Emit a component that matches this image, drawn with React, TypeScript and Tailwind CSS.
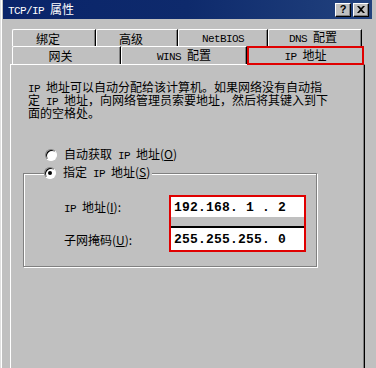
import type { ReactNode } from 'react';

const cjk = "font-['Noto_Sans_CJK_SC',sans-serif]";

// Latin part of SimSun text: narrow monospace
function M({ children }: { children: ReactNode }) {
    return <span className="font-['Liberation_Mono',monospace] text-[11px] tracking-[-0.6px]">{children}</span>;
}

function Radio({ checked }: { checked?: boolean }) {
    return (
        <div className="w-[12px] h-[12px] rounded-full border border-t-[#808080] border-l-[#808080] border-b-white border-r-white bg-white shadow-[inset_1px_1px_0_#000] flex items-center justify-center shrink-0">
            {checked && <div className="w-[4px] h-[4px] rounded-full bg-black" />}
        </div>
    );
}

function Tab({ className, children }: { className: string; children: ReactNode }) {
    return (
        <div className={`h-full flex items-center justify-center bg-[#c0c0c0] border-t border-l border-white border-r border-r-black rounded-tl-[2px] shadow-[inset_-1px_0_0_#808080] text-[12px] leading-[13px] text-black ${className}`}>
            <span className="whitespace-pre">{children}</span>
        </div>
    );
}

function TitleButton({ children }: { children: ReactNode }) {
    return (
        <div className="w-[16px] h-[14px] bg-[#c0c0c0] border border-t-white border-l-white border-b-black border-r-black shadow-[inset_-1px_-1px_0_#808080] flex items-center justify-center">
            {children}
        </div>
    );
}

export default function App() {
    return (
        <div className={`w-[376px] h-[368px] bg-[#c0c0c0] overflow-hidden flex flex-col shadow-[inset_1px_0_0_#dfdfdf,inset_2px_0_0_#fff] ${cjk}`}>
            {/* 标题栏 */}
            <div className="ml-[3px] w-[369px] h-[19px] shrink-0 flex items-center justify-between bg-gradient-to-r from-[#0a246a] via-[#0e2a6c] to-[#22427e] pl-[5px] pr-[3px]">
                <span className="text-white text-[12px] leading-[13px] whitespace-pre">
                    <M>TCP/IP </M>属性
                </span>
                <div className="flex gap-[2px]">
                    <TitleButton>
                        <span className="font-['Liberation_Sans',sans-serif] font-bold text-[11px] leading-none text-black">?</span>
                    </TitleButton>
                    <TitleButton>
                        <svg width="8" height="7" viewBox="0 0 8 7">
                            <path d="M0 0h2l2 2 2-2h2L5 3.5 8 7H6L4 5 2 7H0l3-3.5z" fill="#000" />
                        </svg>
                    </TitleButton>
                </div>
            </div>

            {/* 选项卡 */}
            <div className="mt-[10px] h-[17px] flex pl-[12px] shrink-0">
                <Tab className="w-[84px] pr-[12px]">绑定</Tab>
                <Tab className="w-[82px] pr-[12px]">高级</Tab>
                <Tab className="w-[90px]"><M>NetBIOS</M></Tab>
                <Tab className="w-[94px] pr-[4px]"><M>DNS </M>配置</Tab>
            </div>
            <div className="h-[18px] flex items-end pl-[12px] shrink-0">
                <Tab className="w-[109px] pr-[12px]">网关</Tab>
                <Tab className="w-[126px]"><M>WINS </M>配置</Tab>
                <div className="relative z-10 w-[117px] h-[19px] -mb-[1px] border-2 border-[#e00000] bg-[#c0c0c0] flex items-center justify-center text-[12px] leading-[13px] text-black">
                    <span className="whitespace-pre"><M>IP </M>地址</span>
                </div>
            </div>

            {/* 面板 */}
            <div className="ml-[10px] w-[355px] flex-1 border-l border-t border-white border-r border-r-black shadow-[inset_-1px_0_0_#808080] text-black text-[12px] leading-[13px]">
                <div className="ml-[17px] mt-[15px] whitespace-pre">
                    <div className="h-[13px]"><M>IP </M>地址可以自动分配给该计算机。如果网络没有自动指</div>
                    <div className="h-[13px]">定<M> IP </M>地址，向网络管理员索要地址，然后将其键入到下</div>
                    <div className="h-[13px]">面的空格处。</div>
                </div>

                <div className="ml-[34px] mt-[30px] flex items-center gap-[7px] h-[12px]">
                    <Radio />
                    <span className="whitespace-pre">自动获取<M> IP </M>地址(<u>O</u>)</span>
                </div>

                {/* 指定 IP 地址 分组框 */}
                <div className="relative ml-[12px] mt-[12px] w-[294px] h-[94px] border border-[#808080] shadow-[1px_1px_0_#fff,inset_1px_1px_0_#fff]">
                    <div className="absolute -top-[7px] left-[20px] flex items-center gap-[7px] bg-[#c0c0c0] pr-[2px] h-[12px]">
                        <Radio checked />
                        <span className="whitespace-pre">指定<M> IP </M>地址(<u>S</u>)</span>
                    </div>

                    <div className="flex mt-[21px]">
                        <div className="ml-[40px] w-[105px] pt-[2px] flex flex-col">
                            <div className="h-[20px] flex items-center pt-[1px]">
                                <span className="whitespace-pre"><M>IP </M>地址(<u>I</u>):</span>
                            </div>
                            <div className="h-[11px]" />
                            <div className="h-[22px] flex items-center">
                                <span>子网掩码(<u>U</u>):</span>
                            </div>
                        </div>
                        <div className="w-[137px] h-[57px] border-2 border-[#e00000] flex flex-col font-['Liberation_Mono',monospace] font-bold text-[13px] tracking-[0.2px] whitespace-pre">
                            <div className="h-[20px] bg-white flex items-center pl-[3px] pt-[1px]">192.168. 1 . 2</div>
                            <div className="h-[9px] bg-[#c0c0c0]" />
                            <div className="h-[2px] bg-black" />
                            <div className="h-[22px] bg-white flex items-center pl-[3px]">255.255.255. 0</div>
                        </div>
                    </div>
                </div>
            </div>
        </div>
    );
}
